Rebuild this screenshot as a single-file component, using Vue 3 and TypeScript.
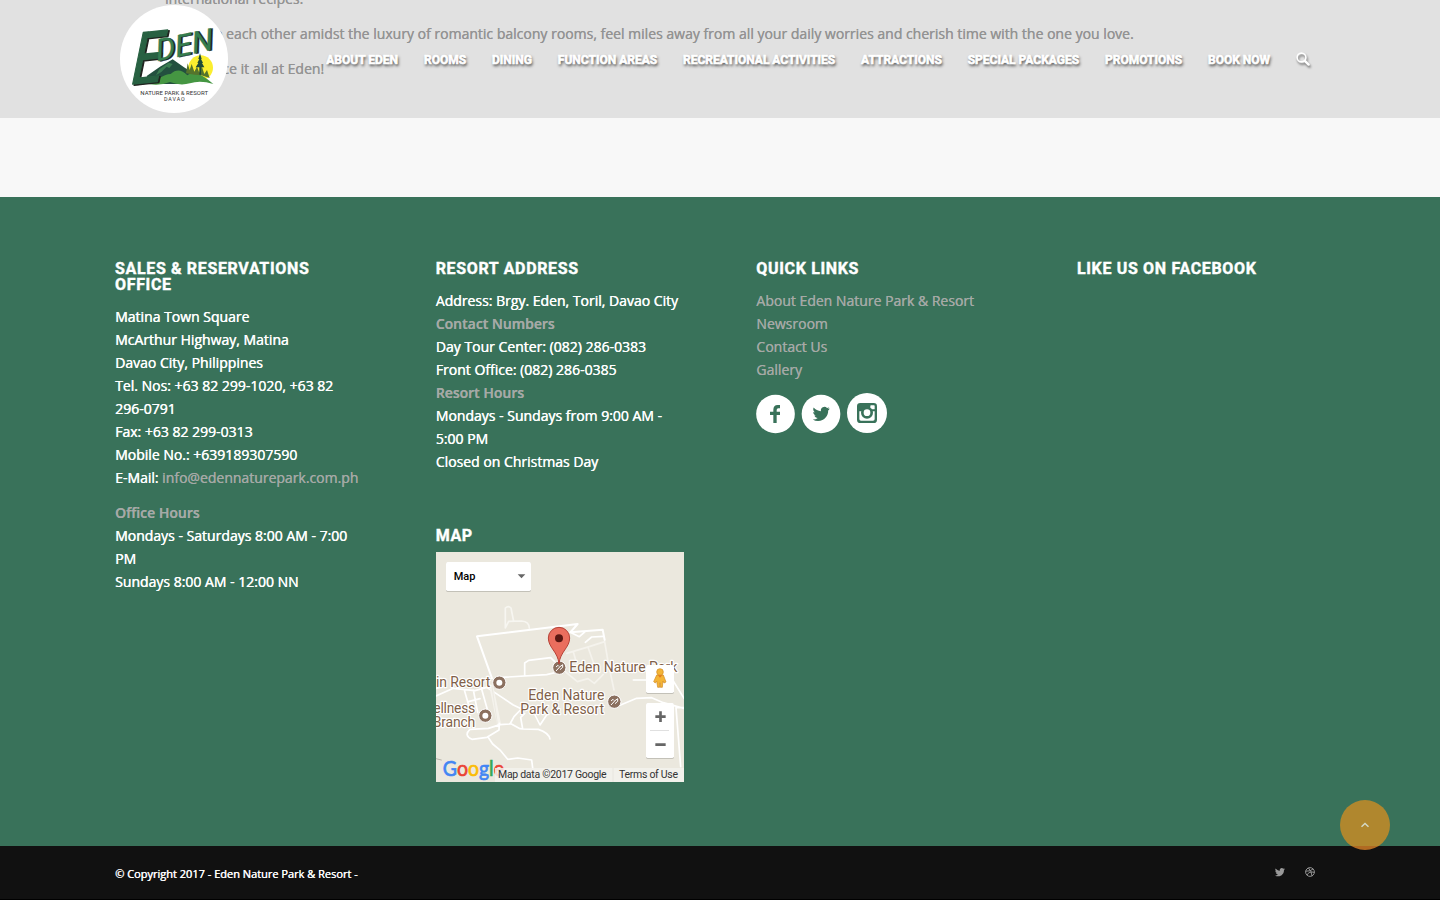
<script setup lang="ts">
const navItems: string[] = [
  'About Eden',
  'Rooms',
  'Dining',
  'Function Areas',
  'Recreational Activities',
  'Attractions',
  'Special Packages',
  'Promotions',
  'Book Now',
]
const quickLinks: string[] = ['About Eden Nature Park & Resort', 'Newsroom', 'Contact Us', 'Gallery']
const birdPath =
  'M23.6 4.9c-.9.4-1.8.7-2.8.8 1-.6 1.8-1.6 2.2-2.7-1 .6-2 1-3.1 1.2A4.9 4.9 0 0 0 11.500 8.700C7.400 8.500 3.800 6.500 1.400 3.600c-1.300 2.200-.7 5.100 1.500 6.600-.8 0-1.600-.2-2.200-.6 0 2.300 1.600 4.400 3.900 4.900-.7.200-1.500.2-2.200.1.600 2 2.400 3.400 4.600 3.400A9.900 9.900 0 0 1 0 20.100a13.900 13.900 0 0 0 7.500 2.200c9.100 0 14.300-7.700 14-14.600.9-.7 1.600-1.600 2.100-2.800z'
</script>

<template>
  <div class="page">
    <main class="intro">
      <p>international recipes.</p>
      <p>Embrace each other amidst the luxury of romantic balcony rooms, feel miles away from all your daily worries and cherish time with the one you love.</p>
      <p>Experience it all at Eden!</p>
    </main>

    <header class="header">
      <a class="logo">
        <svg viewBox="60 15 324 324" width="108" height="108">
          <circle cx="222" cy="177" r="162" fill="#fff" />
          <circle cx="302" cy="203" r="37" fill="#fbee2f" />
          <path d="M140 228L180 200L218 178L252 202L280 220L240 252H150Z" fill="#23503f" />
          <path d="M178 208L206 188L218 192L208 204L200 200L184 216L168 226Z" fill="#3b7c52" />
          <path d="M146 252C178 238 190 222 212 222C230 206 246 210 262 226C284 210 304 222 340 252Q300 240 270 250Q240 258 210 246Q180 258 146 252Z" fill="#459642" />
          <path d="M258 220l5-30 6 20 6-18 8 23 8-15 7 18 7-20 8 24 8-12 8 24-25-8-20-2z" fill="#55742c" />
          <path d="M300 160l5 17-2 0 6 12-3 0 7 13h-10v22h-5v-22h-11l8-13-3 0 6-12-3 0z" fill="#1d4939" />
          <g font-family="Roboto, sans-serif" font-style="italic" stroke-linejoin="round" font-weight="400">
            <g transform="translate(93 253) rotate(-6) skewX(-10)" font-size="212">
              <text x="5" y="3" textLength="94" lengthAdjust="spacingAndGlyphs" fill="#20231f" stroke="#20231f" stroke-width="5">E</text>
              <text x="0" y="0" textLength="94" lengthAdjust="spacingAndGlyphs" fill="#286142" stroke="#286142" stroke-width="4">E</text>
            </g>
            <g transform="translate(172 184) rotate(-12) skewX(-4)" font-size="90">
              <text x="5" y="2" textLength="174" lengthAdjust="spacingAndGlyphs" fill="#20231f" stroke="#20231f" stroke-width="1">DEN</text>
              <text x="0" y="0" textLength="174" lengthAdjust="spacingAndGlyphs" fill="#347d50" stroke="#347d50" stroke-width="1">DEN</text>
            </g>
          </g>
          <g font-family="Roboto, sans-serif" font-size="18" fill="#333">
            <text x="121" y="285" textLength="203">NATURE PARK &amp; RESORT</text>
            <text x="192" y="304" font-size="16" textLength="62">DAVAO</text>
          </g>
        </svg>
      </a>
      <nav class="nav">
        <a v-for="item in navItems" :key="item">{{ item }}</a>
        <svg class="search" viewBox="0 0 14 14" width="14" height="14" fill="none" stroke="#fff">
          <circle cx="5.500" cy="5.500" r="4.400" stroke-width="1.600" />
          <path d="M8.800 8.800L12.600 12.600" stroke-width="2.400" stroke-linecap="round" />
        </svg>
      </nav>
    </header>

    <footer class="footer">
      <section class="col">
        <h3>Sales &amp; Reservations Office</h3>
        <p>
          Matina Town Square<br />McArthur Highway, Matina<br />Davao City, Philippines<br />Tel. Nos: +63 82 299-1020, +63 82<br />296-0791<br />Fax:
          +63 82 299-0313<br />Mobile No.: +639189307590<br />E-Mail: <a>info@edennaturepark.com.ph</a>
        </p>
        <p><strong>Office Hours</strong><br />Mondays - Saturdays 8:00 AM - 7:00<br />PM<br />Sundays 8:00 AM - 12:00 NN</p>
      </section>

      <section class="col">
        <h3>Resort Address</h3>
        <p>
          Address: Brgy. Eden, Toril, Davao City<br /><strong>Contact Numbers</strong><br />Day Tour Center: (082) 286-0383<br />Front Office: (082)
          286-0385<br /><strong>Resort Hours</strong><br />Mondays - Sundays from 9:00 AM -<br />5:00 PM<br />Closed on Christmas Day
        </p>
        <h3 class="map-title">Map</h3>
        <svg class="map" viewBox="18 96 744 690" width="248" height="230">
          <rect x="18" y="96" width="744" height="690" fill="#ebe8de" />
          <g fill="none" stroke="#fff" stroke-width="5" stroke-linejoin="round" stroke-linecap="round">
            <path d="M186 475L141 349L443 312L421 337L470 333L518 329L524 360" stroke-width="6" />
            <path d="M226 324L236 304L274 303Q298 304 298 325M226 324V264Q235 256 243 264L251 304" stroke="#f7f6f1" />
            <path d="M200 473L350 464L396 453M284 468V429L296 421L362 413L374 425M421 337L448 350L464 336M466 367L485 351L520 349" />
            <path d="M410 400L480 379L524 365L535 430L552 510M430 395L448 460M474 382L500 455M400 450L442 485L474 476L493 490L520 463" stroke="#f5f3ed" />
            <path d="M18 528L70 505L135 512L170 502L198 520L250 555L275 567M18 505L38 500M103 510L115 552M130 510L143 577M155 508L174 575M115 545L150 536" />
            <path d="M184 500L207 612" stroke="#f5f3ed" stroke-width="12" />
            <path d="M186 500L202 610" stroke="#e7e4db" stroke-width="2" />
            <path d="M274 567L252 590L240 612L210 614L175 625L120 628Q100 646 126 658L171 652L207 630L208 610M240 610L270 626L278 627M278 627L272 592L284 580M278 627L325 628Q356 638 360 657M174 651L188 672L212 692L233 718L263 714L305 720L310 760" />
            <path d="M552 563L620 535L665 533L700 548L762 565M738 563L752 740M738 563H762M610 480H648M728 480L762 535M315 585L330 615L350 585" />
            <path d="M18 716L34 720" stroke="#b9b4aa" stroke-width="3" />
          </g>
          <g font-family="Roboto, sans-serif" font-size="42" fill="#805f49" stroke="#fff" stroke-width="7" stroke-linejoin="round" paint-order="stroke">
            <text x="418" y="456" textLength="324">Eden Nature Park</text>
            <text x="295" y="540" textLength="228">Eden Nature</text>
            <text x="271" y="582" textLength="251">Park &amp; Resort</text>
            <text x="18" y="501" textLength="163">in Resort</text>
            <text x="10" y="579" textLength="126">ellness</text>
            <text x="8" y="621" textLength="128">Branch</text>
          </g>
          <g fill="#8b705f" stroke="#fff" stroke-width="3">
            <circle cx="388" cy="443" r="20" /><circle cx="553" cy="545" r="20" />
            <circle cx="208" cy="488" r="20" /><circle cx="166" cy="587" r="20" />
          </g>
          <circle cx="208" cy="488" r="9" fill="#fff" /><circle cx="166" cy="587" r="9" fill="#fff" />
          <g fill="none" stroke="#fff" stroke-width="3">
            <path d="M378 453L390 440L398 434M378 441l6-5 4 4M390 449l8-7v-8M543 555L555 542L563 536M543 543l6-5 4 4M555 551l8-7v-8" />
          </g>
          <path d="M387 432C384 395 355 383 355 354A32 32 0 0 1 419 354C419 383 390 395 387 432Z" fill="#ea6e5e" stroke="#b54237" stroke-width="3" />
          <circle cx="387" cy="355" r="12" fill="#591712" />
          <g class="control"><rect x="48" y="126" width="255" height="87" rx="5" /><rect x="648" y="435" width="84" height="84" rx="5" /><rect x="648" y="549" width="84" height="165" rx="5" /></g>
          <text x="71" y="180" font-family="Roboto, sans-serif" font-size="33" font-weight="500" textLength="65">Map</text>
          <path d="M263 163H286L274.500 175Z" fill="#666" />
          <g fill="#f4b436" stroke="#d08a22" stroke-width="2">
            <path d="M680 465H700L708 486L702 489L699 483L697 502H691V489H689V502H683L680 483L676 489L671 485Z" />
            <circle cx="690" cy="456" r="10" />
          </g>
          <path d="M684 466L690 473L697 466" fill="#e57a20" />
          <path d="M676 590H707M691.500 574V606M676 674H707" fill="none" stroke="#666" stroke-width="8" />
          <path d="M660 631.500H717" stroke="#e0e0e0" stroke-width="3" />
          <text class="google" x="38" y="767" font-size="64" textLength="184" lengthAdjust="spacingAndGlyphs"><tspan fill="#4285f4" stroke="#4285f4">G</tspan><tspan fill="#ea4335" stroke="#ea4335">o</tspan><tspan fill="#fbbc05" stroke="#fbbc05">o</tspan><tspan fill="#4285f4" stroke="#4285f4">g</tspan><tspan fill="#34a853" stroke="#34a853">l</tspan><tspan fill="#ea4335" stroke="#ea4335">e</tspan></text>
          <path d="M195 744H762V786H195Z" fill="#f3f2ed" fill-opacity=".85" />
          <path d="M549 744V786" stroke="#e8e6df" stroke-width="3" />
          <g font-family="Roboto, sans-serif" font-size="31.500" fill="#333">
            <text x="204" y="774" textLength="326">Map data ©2017 Google</text>
            <text x="567" y="774" textLength="177">Terms of Use</text>
          </g>
        </svg>
      </section>

      <section class="col">
        <h3>Quick Links</h3>
        <ul class="links">
          <li v-for="link in quickLinks" :key="link"><a>{{ link }}</a></li>
        </ul>
        <svg class="social" viewBox="33 21 396 126" width="132" height="42">
          <g fill="#fff"><circle cx="91.500" cy="87" r="58" /><circle cx="228" cy="87" r="58" /><circle cx="366" cy="84" r="60" /></g>
          <path d="M85 114V90H75V80H85V75Q85 60 98 60H105V70H100Q95 70 95 75V80H105V90H95V114Z" fill="#39725a" />
          <svg x="202" y="60" width="54" height="54" viewBox="0 0 24 25"><path :d="birdPath" fill="#39725a" /></svg>
          <rect x="336" y="54" width="60" height="60" rx="10" fill="#39725a" />
          <path d="M343 79H389V102Q389 107 384 107H348Q343 107 343 102Z" fill="#fff" />
          <rect x="376" y="61" width="13" height="12" rx="2" fill="#fff" />
          <circle cx="366" cy="83" r="18" fill="#39725a" />
          <circle cx="366" cy="83" r="10" fill="#fff" />
        </svg>
      </section>

      <section class="col">
        <h3>Like us on Facebook</h3>
      </section>
    </footer>

    <div class="socket">
      <span>© Copyright 2017 - Eden Nature Park &amp; Resort -</span>
      <div class="socket-icons">
        <svg viewBox="0 0 24 24" width="10" height="10"><path :d="birdPath" fill="#999" /></svg>
        <svg viewBox="0 0 24 24" width="10" height="10" fill="none" stroke="#999" stroke-width="2.300">
          <circle cx="12" cy="12" r="10.500" />
          <path d="M8 2Q16 10 17 22M1.500 10Q14 11 19.500 4.500M4.500 19.500Q10 9 22.500 13" />
        </svg>
      </div>
    </div>

    <a class="to-top">
      <svg viewBox="0 0 10 6" width="10" height="6"><path d="M1.500 4.700L5 1.500L8.500 4.700" fill="none" stroke="#d4d9c6" stroke-width="1.500" /></svg>
    </a>
  </div>
</template>

<style>
body {
  margin: 0;
  background: #000;
}
</style>

<style scoped>
.page {
  position: relative;
  width: 1440px;
  height: 900px;
  overflow: hidden;
  font-family: 'Open Sans', sans-serif;
  font-size: 14px;
  line-height: 23px;
}
.intro {
  display: flow-root;
  box-sizing: border-box;
  height: 197px;
  padding: 0 165px;
  background: #f8f8f8;
  color: #a2a2a2;
  white-space: nowrap;
  letter-spacing: 0.004px;
  text-shadow: 0.2px 0 0 #a2a2a2;
}
.intro p {
  margin: 0 0 12px;
}
.intro p:first-child {
  margin-top: -13px;
}
.header {
  position: absolute;
  top: 0;
  left: 0;
  box-sizing: border-box;
  width: 1440px;
  height: 118px;
  padding: 5px 130px 5px 120px;
  display: flex;
  justify-content: space-between;
  background: rgba(0, 0, 0, 0.09);
}
.logo,
.logo svg {
  display: block;
}
.nav {
  display: flex;
  align-items: center;
  gap: 25.9px;
  color: #fff;
  font: 700 12px/20px Roboto, sans-serif;
  text-transform: uppercase;
  text-shadow: 1px 2px 3px rgba(0, 0, 0, 0.75);
  -webkit-text-stroke: 0.6px #fff;
}
.nav a {
  position: relative;
  top: 1px;
  white-space: nowrap;
}
.search {
  filter: drop-shadow(1px 2px 1px rgba(0, 0, 0, 0.5));
}
.footer {
  box-sizing: border-box;
  height: 649px;
  padding: 64px 115px 0;
  display: grid;
  grid-template-columns: repeat(4, 248px);
  justify-content: space-between;
  background: #39725a;
  color: #fff;
}
.col {
  white-space: nowrap;
}
h3 {
  margin: 0 0 12px;
  font: 700 16px/16px Roboto, sans-serif;
  letter-spacing: 0.66px;
  text-transform: uppercase;
  white-space: normal;
  -webkit-text-stroke: 0.4px #fff;
}
.col p {
  margin: 0 0 12px;
}
.col p,
.socket span {
  text-shadow: 0.4px 0 0 currentColor;
}
.col a,
.col strong {
  color: #a5a9a6;
  text-shadow: 0.3px 0 0 #a5a9a6;
}
.col strong {
  font-weight: 600;
}
.map-title {
  margin: 55px 0 8px;
}
.map,
.social {
  display: block;
}
.control {
  fill: #fff;
  filter: drop-shadow(0 2px 2px rgba(0, 0, 0, 0.25));
}
.google {
  font-family: Lato, sans-serif;
  stroke-width: 2px;
}
.links {
  margin: 0;
  padding: 0;
  list-style: none;
}
.social {
  margin-top: 11px;
}
.socket {
  box-sizing: border-box;
  height: 53px;
  padding: 2px 125px 0 115px;
  display: flex;
  align-items: center;
  justify-content: space-between;
  background: #111;
  color: #fff;
  font-size: 11px;
}
.socket-icons {
  display: flex;
  align-items: center;
  gap: 20px;
  padding-bottom: 3px;
}
.to-top {
  position: absolute;
  left: 1340px;
  top: 800px;
  width: 50px;
  height: 50px;
  border-radius: 50%;
  display: flex;
  align-items: center;
  justify-content: center;
  background: linear-gradient(#b0872e 46px, #b06a22 46px);
}
</style>
